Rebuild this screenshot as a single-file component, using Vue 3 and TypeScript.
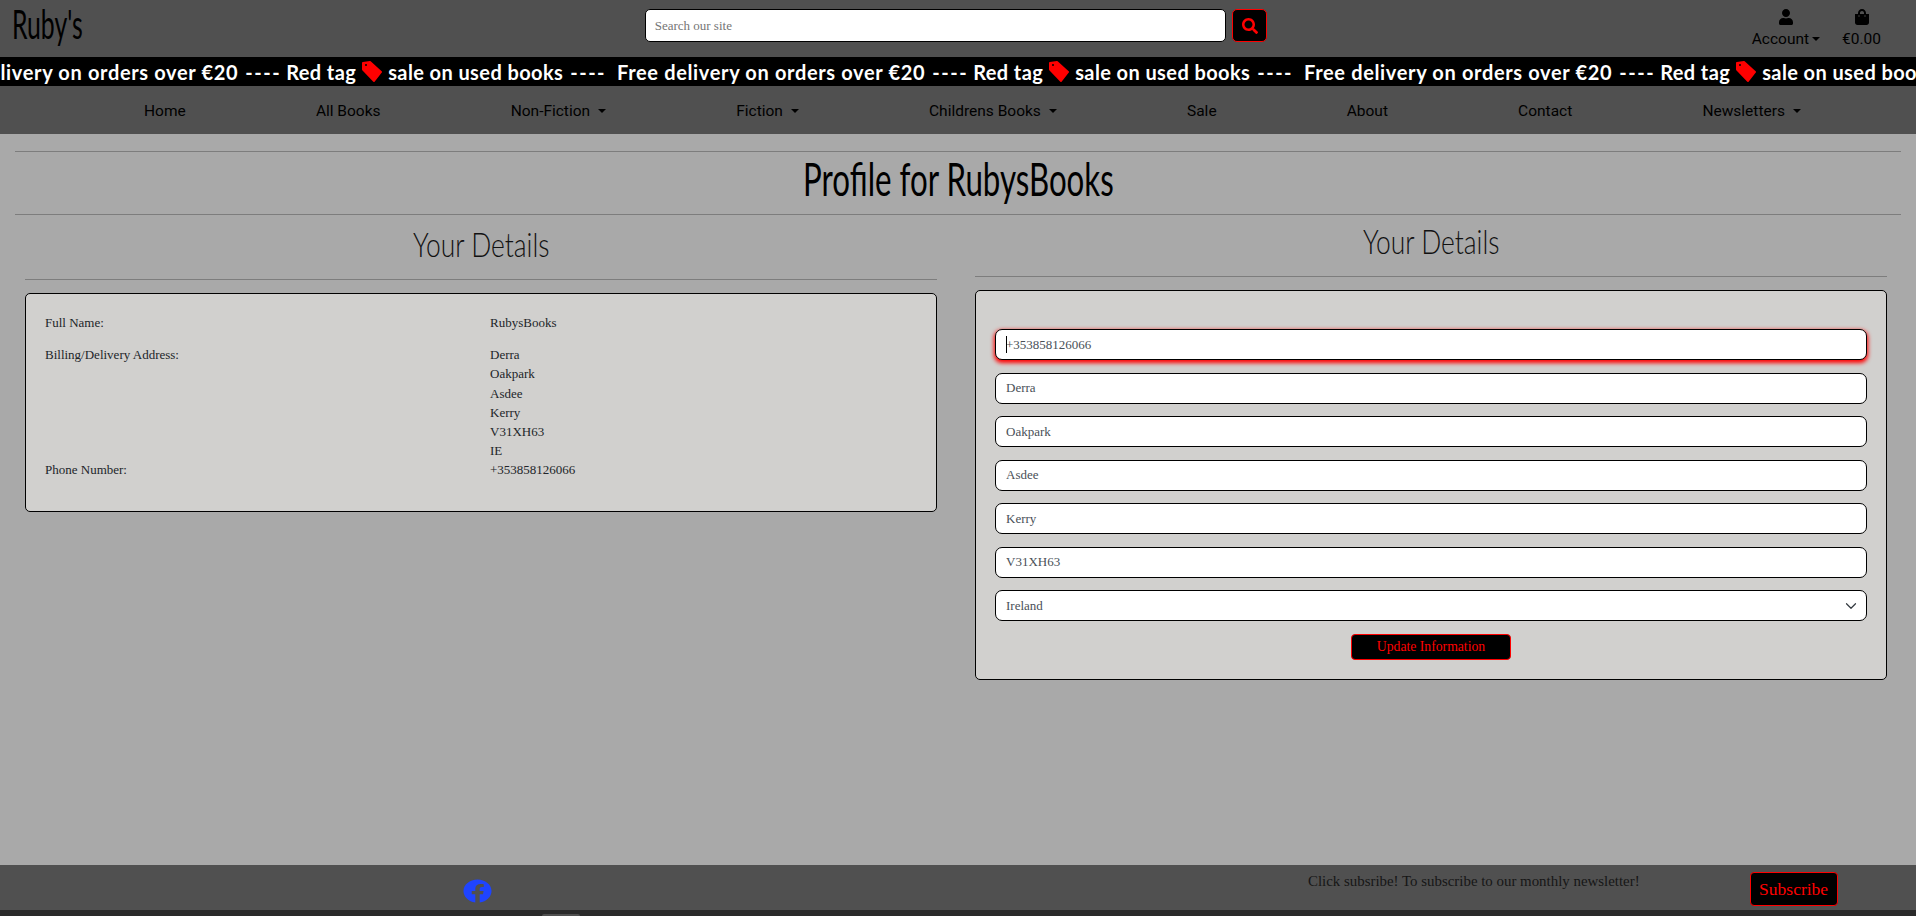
<template>
  <div class="page">
    <header class="topbar">
      <div class="logo"><span>Ruby's</span></div>
      <form class="search" @submit.prevent>
        <input class="search-input" type="text" placeholder="Search our site" />
        <button class="search-btn" type="button" aria-label="Search">
          <svg viewBox="0 0 512 512" width="16" height="16"><path fill="#f00" :d="icons.search" /></svg>
        </button>
      </form>
      <div class="top-actions">
        <a class="top-link">
          <svg viewBox="0 0 448 512" width="14" height="16"><path fill="#000" :d="icons.user" /></svg>
          <span>Account<i class="caret-down small"></i></span>
        </a>
        <a class="top-link">
          <svg viewBox="0 0 448 512" width="14" height="16"><path fill="#000" :d="icons.bag" /></svg>
          <span>€0.00</span>
        </a>
      </div>
    </header>

    <div class="ticker">
      <div class="ticker-track">
        <span v-for="n in 4" :key="n" class="ticker-item">
          <span>Free delivery on orders over €20</span>
          <span class="dashes">----</span>
          <span class="tight">Red tag</span>
          <svg class="tag" viewBox="0 0 20 21" width="20" height="21">
            <path fill="#f00" stroke="#f00" stroke-width="2" stroke-linejoin="round" d="M1 2 L8 1 L19 11 L12 20 L1 8.500 Z" />
            <circle cx="4" cy="4" r="1" fill="#000" />
          </svg>
          <span class="tight">sale on used books</span>
          <span class="dashes">----</span>
        </span>
      </div>
    </div>

    <nav class="mainnav">
      <a v-for="item in navItems" :key="item.label">{{ item.label }}<i v-if="item.drop" class="caret-down"></i></a>
    </nav>

    <main class="content">
      <div class="title-band">
        <h1><span>Profile for RubysBooks</span></h1>
      </div>

      <div class="columns">
        <section class="col col-left">
          <h2><span>Your Details</span></h2>
          <div class="card details">
            <div class="detail-row">
              <span>Full Name:</span>
              <span>RubysBooks</span>
            </div>
            <div class="detail-row">
              <span>Billing/Delivery Address:</span>
              <span>
                <span v-for="line in addressLines" :key="line" class="line">{{ line }}</span>
              </span>
            </div>
            <div class="detail-row">
              <span>Phone Number:</span>
              <span>+353858126066</span>
            </div>
          </div>
        </section>

        <section class="col">
          <h2><span>Your Details</span></h2>
          <form class="card edit-form" @submit.prevent>
            <div class="field focused">
              <input type="text" value="+353858126066" />
              <span class="text-caret"></span>
            </div>
            <div v-for="value in formValues" :key="value" class="field">
              <input type="text" :value="value" />
            </div>
            <div class="field">
              <select>
                <option>Ireland</option>
              </select>
              <svg class="chevron" viewBox="0 0 16 16" width="12" height="12"><path fill="none" stroke="#343a40" stroke-width="1.600" stroke-linecap="round" stroke-linejoin="round" d="M2 5l6 6 6-6" /></svg>
            </div>
            <button class="update-btn" type="button">Update Information</button>
          </form>
        </section>
      </div>
    </main>

    <footer class="footer">
      <div class="footer-main">
        <svg class="fb" viewBox="0 0 512 512" preserveAspectRatio="none"><path fill="#1f44ff" :d="icons.facebook" /></svg>
        <p class="footer-text">Click subsribe! To subscribe to our monthly newsletter!</p>
        <button class="subscribe-btn" type="button">Subscribe</button>
      </div>
      <div class="footer-strip"><span class="strip-tab"></span></div>
    </footer>
  </div>
</template>

<script setup lang="ts">
interface NavItem {
  label: string
  drop?: boolean
}

const navItems: NavItem[] = [
  { label: 'Home' },
  { label: 'All Books' },
  { label: 'Non-Fiction', drop: true },
  { label: 'Fiction', drop: true },
  { label: 'Childrens Books', drop: true },
  { label: 'Sale' },
  { label: 'About' },
  { label: 'Contact' },
  { label: 'Newsletters', drop: true }
]

const addressLines = ['Derra', 'Oakpark', 'Asdee', 'Kerry', 'V31XH63', 'IE']
const formValues = ['Derra', 'Oakpark', 'Asdee', 'Kerry', 'V31XH63']

const icons = {
  search: 'M505 442.7L405.3 343c-4.5-4.5-10.6-7-17-7H372c27.6-35.3 44-79.7 44-128C416 93.1 322.9 0 208 0S0 93.1 0 208s93.1 208 208 208c48.3 0 92.7-16.4 128-44v16.3c0 6.4 2.5 12.5 7 17l99.7 99.7c9.4 9.4 24.6 9.4 33.9 0l28.3-28.3c9.4-9.4 9.4-24.6.1-34zM208 336c-70.7 0-128-57.2-128-128 0-70.7 57.2-128 128-128 70.7 0 128 57.2 128 128 0 70.7-57.2 128-128 128z',
  user: 'M224 256c70.7 0 128-57.3 128-128S294.7 0 224 0 96 57.3 96 128s57.3 128 128 128zm89.6 32h-16.7c-22.2 10.2-46.9 16-72.9 16s-50.6-5.8-72.9-16h-16.7C60.2 288 0 348.2 0 422.4V464c0 26.5 21.5 48 48 48h352c26.5 0 48-21.5 48-48v-41.6c0-74.2-60.2-134.4-134.4-134.4z',
  bag: 'M352 160v-32C352 57.42 294.579 0 224 0 153.42 0 96 57.42 96 128v32H0v272c0 44.183 35.817 80 80 80h288c44.183 0 80-35.817 80-80V160h-96zm-192-32c0-35.29 28.71-64 64-64s64 28.71 64 64v32H160v-32zm160 120c-13.255 0-24-10.745-24-24s10.745-24 24-24 24 10.745 24 24-10.745 24-24 24zm-192 0c-13.255 0-24-10.745-24-24s10.745-24 24-24 24 10.745 24 24-10.745 24-24 24z',
  facebook: 'M504 256C504 119 393 8 256 8S8 119 8 256c0 123.78 90.69 226.38 209.25 245V327.69h-63V256h63v-54.64c0-62.15 37-96.48 93.67-96.48 27.14 0 55.52 4.84 55.52 4.84v61h-31.28c-30.8 0-40.41 19.12-40.41 38.73V256h68.78l-11 71.69h-57.78V501C413.31 482.38 504 379.78 504 256z'
}
</script>

<style>
html,
body {
  margin: 0;
  overflow: hidden;
}
</style>

<style scoped>
.page {
  height: 916px;
  display: flex;
  flex-direction: column;
  background: #a9a9a9;
  font-family: "Liberation Serif", serif;
  font-size: 13px;
  color: #212529;
  overflow: hidden;
}

/* top bar */
.topbar {
  height: 57px;
  background: #505050;
  display: grid;
  grid-template-columns: 1fr 1fr 1fr;
  box-sizing: border-box;
}

.logo {
  padding: 2px 0 0 12px;
  font-family: "Lato", sans-serif;
  font-size: 40px;
  line-height: 44px;
  color: #000;
}

.logo span {
  display: inline-block;
  transform: scaleX(0.62);
  transform-origin: left center;
}

.search {
  display: flex;
  gap: 6px;
  padding: 9px 10px 0 6px;
  align-items: flex-start;
}

.search-input {
  flex: 1;
  height: 33px;
  box-sizing: border-box;
  padding: 0 9px;
  border: 1px solid #000;
  border-radius: 5px;
  background: #fff;
  font-family: inherit;
  font-size: 13px;
  outline: none;
}

.search-input::placeholder {
  color: #757575;
}

.search-btn {
  width: 35px;
  height: 33px;
  padding: 0;
  background: #000;
  border: 1px solid #f00;
  border-radius: 5px;
  display: flex;
  align-items: center;
  justify-content: center;
}

.top-actions {
  display: flex;
  justify-content: flex-end;
  align-items: flex-start;
  gap: 22px;
  padding: 9px 35px 0 0;
}

.top-link {
  display: flex;
  flex-direction: column;
  align-items: center;
  gap: 3px;
  font-family: "Roboto", sans-serif;
  font-size: 15.500px;
  line-height: 22px;
  color: #000;
}

/* ticker */
.ticker {
  height: 29px;
  background: #000;
  overflow: hidden;
}

.ticker-track {
  display: flex;
  margin-left: -70px;
}

.ticker-item {
  flex: 0 0 687px;
  min-width: 0;
  white-space: nowrap;
  display: flex;
  align-items: center;
  gap: 7px;
  height: 29px;
  font-family: "Lato", sans-serif;
  font-weight: 700;
  font-size: 20px;
  letter-spacing: 0.650px;
  color: #fff;
}

.tight {
  letter-spacing: 0.400px;
}

.dashes {
  letter-spacing: 1.500px;
  margin-right: -2px;
}

.tag {
  flex: none;
  margin: 0 -1px;
}

/* nav */
.mainnav {
  height: 48px;
  background: #505050;
  display: flex;
  justify-content: space-around;
  align-items: center;
  box-sizing: border-box;
  padding: 2px 50px 0 79px;
  font-family: "Roboto", sans-serif;
  font-size: 15.500px;
  color: #000;
}

.caret-down {
  display: inline-block;
  margin-left: 8px;
  vertical-align: 3px;
  border-top: 4.800px solid #000;
  border-left: 4.800px solid transparent;
  border-right: 4.800px solid transparent;
}

.caret-down.small {
  margin-left: 3px;
  border-top-width: 4px;
  border-left-width: 4px;
  border-right-width: 4px;
}

/* content */
.content {
  flex: 1;
  padding-top: 17px;
}

.title-band {
  margin: 0 15px;
  height: 62px;
  border-top: 1px solid #7d7d7d;
  border-bottom: 1px solid #7d7d7d;
  display: flex;
  align-items: center;
  justify-content: center;
}

h1 {
  margin: 0 0 9px;
  font-family: "Lato", sans-serif;
  font-weight: 400;
  font-size: 46px;
  line-height: 56px;
  color: #000;
}

h1 span {
  display: inline-block;
  transform: scaleX(0.68);
}

.columns {
  display: grid;
  grid-template-columns: 1fr 1fr;
  gap: 38px;
  padding: 10px 29px 0 25px;
  align-items: start;
}

h2 {
  margin: 0 0 13px;
  height: 51px;
  line-height: 32px;
  text-align: center;
  border-bottom: 1px solid #7d7d7d;
  font-family: "Lato", sans-serif;
  font-weight: 300;
  font-size: 33px;
  color: #111;
}

h2 span {
  display: inline-block;
  transform: scaleX(0.8);
}

.col-left {
  padding-top: 3px;
}

.card {
  background: #d1d0ce;
  border: 1px solid #000;
  border-radius: 5px;
}

.details {
  height: 219px;
  box-sizing: border-box;
  padding: 19px 19px 0;
  line-height: 19.200px;
}

.detail-row {
  display: grid;
  grid-template-columns: 445px 1fr;
  margin-bottom: 13px;
}

.detail-row:nth-child(2) {
  margin-bottom: 0;
}

.line {
  display: block;
}

.edit-form {
  height: 390px;
  box-sizing: border-box;
  padding: 38px 19px 0;
  display: flex;
  flex-direction: column;
}

.field {
  position: relative;
  margin-bottom: 12.500px;
}

.field input,
.field select {
  display: block;
  width: 100%;
  height: 31px;
  box-sizing: border-box;
  padding: 0 10px;
  border: 1px solid #000;
  border-radius: 7px;
  background: #fff;
  color: #495057;
  font-family: inherit;
  font-size: 13px;
  outline: none;
  appearance: none;
  caret-color: transparent;
}

.focused input {
  box-shadow: 0 2px 4px 1px #f00;
}

.text-caret {
  position: absolute;
  left: 11px;
  top: 7px;
  width: 1px;
  height: 17px;
  background: #000;
}

.chevron {
  position: absolute;
  right: 10px;
  top: 10px;
  pointer-events: none;
}

.update-btn {
  align-self: center;
  width: 160px;
  height: 26px;
  padding: 0;
  background: #000;
  border: 1px solid #f00;
  border-radius: 4px;
  color: #f00;
  font-family: inherit;
  font-size: 13.700px;
}

/* footer */
.footer {
  background: #505050;
}

.footer-main {
  height: 45px;
  display: flex;
  align-items: flex-start;
}

.fb {
  width: 29px;
  height: 24px;
  margin: 14px 0 0 463px;
}

.footer-text {
  margin: 8px 0 0 816px;
  font-size: 14.900px;
  color: #161616;
  white-space: nowrap;
}

.subscribe-btn {
  margin: 7px 0 0 110px;
  width: 88px;
  height: 34px;
  padding: 0;
  background: #000;
  border: 1px solid #f00;
  border-radius: 4px;
  color: #f00;
  font-family: inherit;
  font-size: 17.500px;
}

.footer-strip {
  height: 6px;
  background: #2a2a2a;
  display: flex;
  align-items: flex-end;
}

.strip-tab {
  width: 38px;
  height: 2px;
  margin-left: 542px;
  background: #505050;
  border-radius: 3px 3px 0 0;
}
</style>
